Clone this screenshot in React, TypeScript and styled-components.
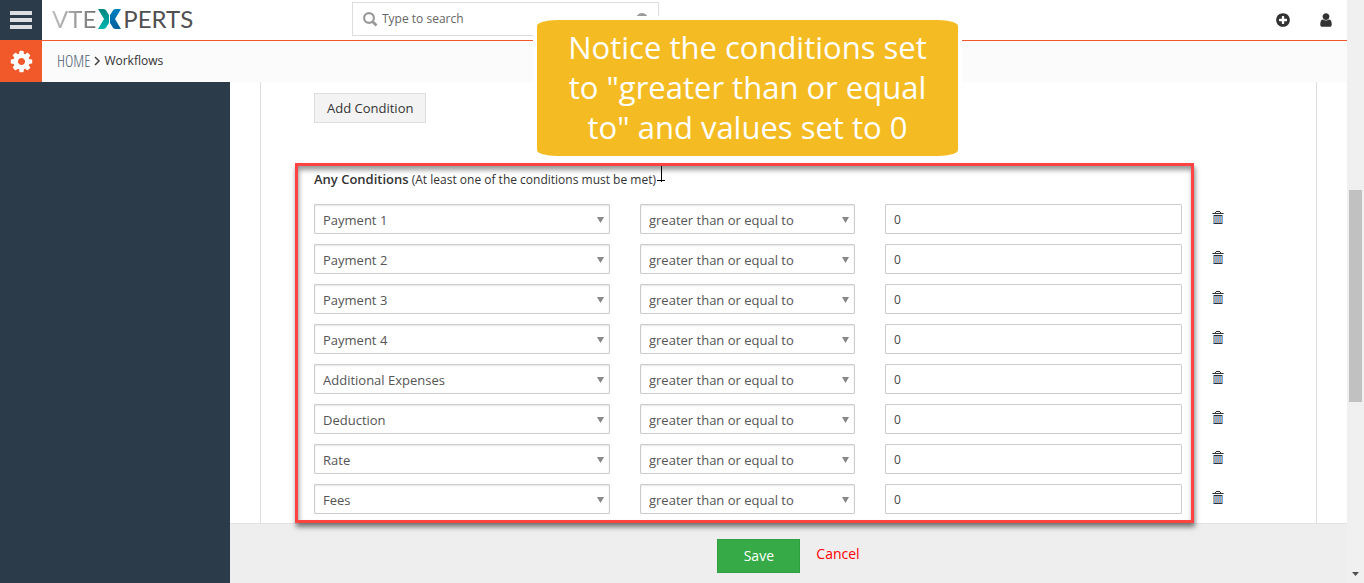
import React from "react";
import styled, { createGlobalStyle } from "styled-components";

const GlobalStyle = createGlobalStyle`
  *, *::before, *::after { box-sizing: border-box; }
  html, body, #root { height: 100%; }
  body {
    margin: 0;
    background: #fff;
    color: #333;
    font-family: "Open Sans", "Noto Sans", sans-serif;
    font-size: 13px;
    line-height: 20px;
  }
  button, input, select { font: inherit; color: inherit; }
`;

const Page = styled.div`
  position: relative;
  display: flex;
  min-height: 100vh;
`;

const Content = styled.div`
  flex: 1;
  min-width: 0;
  display: flex;
  flex-direction: column;
`;

const Header = styled.header`
  display: flex;
  align-items: flex-start;
  height: 41px;
  border-bottom: 1px solid #f1592a;
`;

const SquareButton = styled.button<{ $tone: string; $height: number }>`
  flex: none;
  display: flex;
  align-items: center;
  justify-content: center;
  width: 42px;
  height: ${(p) => p.$height}px;
  padding: 0;
  border: 0;
  background: ${(p) => p.$tone};
  color: #fff;
  cursor: pointer;
`;

const Brand = styled.div`
  flex: none;
  display: flex;
  width: 352px;
  height: 40px;
`;

const Logo = styled.a`
  display: flex;
  align-items: center;
  gap: 2px;
  padding-left: 10px;
  font-family: Lato, "Open Sans", sans-serif;
  font-size: 24px;
  line-height: 38px;
  height: 38px;
  text-decoration: none;
  color: #505050;
`;

const LogoFade = styled.span`
  background: linear-gradient(90deg, #bdbdbd, #9a9a9a 60%, #6a6a6a);
  background-clip: text;
  color: transparent;
`;

const SearchBox = styled.label`
  flex: none;
  display: flex;
  align-items: center;
  gap: 4px;
  width: 307px;
  height: 34px;
  margin-top: 2px;
  padding: 0 10px;
  border: 1px solid #ddd;
  color: #999;
`;

const SearchInput = styled.input`
  flex: 1;
  min-width: 0;
  padding: 0;
  border: 0;
  outline: 0;
  background: none;
  font-size: 12px;
  &::placeholder { color: #666; opacity: 1; }
`;

const HeaderActions = styled.div`
  flex: 1;
  display: flex;
  align-items: center;
  justify-content: flex-end;
  gap: 27px;
  height: 40px;
  padding-right: 13px;
`;

const IconButton = styled.button`
  display: flex;
  padding: 0;
  border: 0;
  background: none;
  color: #333;
  cursor: pointer;
`;

const Breadcrumb = styled.nav`
  display: flex;
  align-items: center;
  height: 42px;
  margin-top: -1px;
  background: linear-gradient(#f1592a 1px, #fbfbfb 1px);
`;

const HomeLink = styled.a`
  padding-left: 15px;
  font-family: "Open Sans Condensed Light", "Open Sans Light Condensed", "Open Sans Condensed", "Liberation Sans", sans-serif;
  font-size: 16px;
  font-weight: 300;
  text-decoration: none;
  color: #4c5b70;
`;

const Crumb = styled.span`
  font-size: 12px;
  color: #333;
`;

const Workspace = styled.div`
  flex: 1;
  display: flex;
`;

const Sidebar = styled.aside`
  flex: none;
  width: 230px;
  background: #2c3b49;
`;

const Main = styled.main`
  flex: 1;
  min-width: 0;
  display: flex;
  flex-direction: column;
`;

const Panel = styled.section`
  flex: 1;
  margin: 0 30px;
  padding-top: 11px;
  border: solid #ddd;
  border-width: 0 1px;
`;

const AddButton = styled.button`
  display: block;
  height: 30px;
  margin-left: 53px;
  padding: 0 12px;
  border: 1px solid #ddd;
  background: #f3f3f3;
  color: #333;
  cursor: pointer;
`;

const Conditions = styled.fieldset`
  position: relative;
  min-width: 0;
  margin: 40px 0 0;
  padding: 6px 0 9px 53px;
  border: 0;
`;

const Highlight = styled.div`
  position: absolute;
  z-index: 2;
  inset: 0 122px 0 34px;
  border: 3px solid #ff4343;
  box-shadow: 1px 4px 5px rgba(0, 0, 0, 0.5), inset 1px 4px 5px rgba(0, 0, 0, 0.4);
  pointer-events: none;
`;

const Caption = styled.p`
  margin: 0 0 14px;
  font-size: 12px;
  strong { font-size: 13px; font-weight: 600; }
`;

const Rows = styled.div`
  display: grid;
  gap: 10px;
`;

const Row = styled.div`
  display: grid;
  grid-template-columns: 296fr 215fr 297fr 74px;
  column-gap: 30px;
  padding-right: 30px;
`;

const SelectWrap = styled.span`
  position: relative;
  display: block;
  color: #888;
  svg { position: absolute; right: 6px; top: 13px; pointer-events: none; }
`;

const Select = styled.select`
  appearance: none;
  display: block;
  width: 100%;
  height: 30px;
  padding: 2px 20px 0 8px;
  border: 1px solid #ccc;
  border-radius: 1px;
  background: #fff;
  box-shadow: inset 0 1px 2px rgba(0, 0, 0, 0.1);
  color: #555;
`;

const ValueInput = styled.input`
  width: 100%;
  height: 30px;
  padding: 0 8px;
  border: 1px solid #ccc;
  border-radius: 1px;
  background: #fff;
  font-size: 12px;
  color: #444;
`;

const TrashButton = styled(IconButton)`
  align-self: start;
  padding-top: 7px;
`;

const Footer = styled.footer`
  flex: none;
  display: flex;
  justify-content: center;
  align-items: flex-start;
  gap: 16px;
  height: 60px;
  padding-top: 15px;
  border-top: 1px solid #e2e2e2;
  background: #eee;
  font-size: 14px;
`;

const SaveButton = styled.button`
  width: 83px;
  height: 34px;
  padding: 0;
  border: 1px solid #2f9e42;
  background: #35aa47;
  color: #fff;
  cursor: pointer;
`;

const CancelLink = styled.a`
  padding-top: 5px;
  text-decoration: none;
  color: #f00;
`;

const ScrollTrack = styled.div`
  flex: none;
  display: flex;
  flex-direction: column;
  align-items: center;
  width: 17px;
  padding: 190px 2px 7px;
  background: #f0f0f0;
  color: #505050;
`;

const ScrollThumb = styled.div`
  width: 13px;
  height: 212px;
  margin-bottom: auto;
  background: #c1c1c1;
`;

const Callout = styled.p`
  position: absolute;
  z-index: 3;
  left: 537px;
  top: 20px;
  width: 421px;
  margin: 0;
  padding: 7px 0 9px;
  border-radius: 20px / 6px;
  background: #f4bc22;
  box-shadow: 0 0 0 4px #fff;
  font-family: "Open Sans", sans-serif;
  font-size: 31px;
  line-height: 40px;
  text-align: center;
  color: #fff;
`;

const Pointer = styled.svg`
  position: absolute;
  z-index: 4;
  left: 657px;
  top: 166px;
`;

const FIELDS = [
  "Payment 1",
  "Payment 2",
  "Payment 3",
  "Payment 4",
  "Additional Expenses",
  "Deduction",
  "Rate",
  "Fees",
];

function Glyph({ d, size }: { d: string; size: number }) {
  return (
    <svg width={size} height={size} viewBox="0 0 1792 1792" fill="currentColor" aria-hidden="true">
      <path d={d} />
    </svg>
  );
}

const COG =
  "M1152 896q0-106-75-181t-181-75-181 75-75 181 75 181 181 75 181-75 75-181zm512-109v222q0 12-8 23t-20 13l-185 28q-19 54-39 91 35 50 107 138 10 12 10 25t-9 23q-27 37-99 108t-94 71q-12 0-26-9l-138-108q-44 23-91 38-16 136-29 186-7 28-36 28h-222q-14 0-24.5-8.5t-11.5-21.5l-28-184q-49-16-90-37l-141 107q-10 9-25 9-14 0-25-11-126-114-165-168-7-10-7-23 0-12 8-23 15-21 51-66.5t54-70.5q-27-50-41-99l-183-27q-13-2-21-12.5t-8-23.5v-222q0-12 8-23t19-13l186-28q14-46 39-92-40-57-107-138-10-12-10-24 0-10 9-23 26-36 98.5-107.5t94.5-71.5q13 0 26 10l138 107q44-23 91-38 16-136 29-186 7-28 36-28h222q14 0 24.5 8.5t11.5 21.5l28 184q49 16 90 37l142-107q9-9 24-9 13 0 25 10 129 119 165 170 7 8 7 22 0 12-8 23-15 21-51 66.5t-54 70.5q26 50 41 98l183 28q13 2 21 12.5t8 23.5z";
const PLUS =
  "M1344 960v-128q0-26-19-45t-45-19h-256v-256q0-26-19-45t-45-19h-128q-26 0-45 19t-19 45v256h-256q-26 0-45 19t-19 45v128q0 26 19 45t45 19h256v256q0 26 19 45t45 19h128q26 0 45-19t19-45v-256h256q26 0 45-19t19-45zm320-64q0 209-103 385.5t-279.5 279.5-385.5 103-385.5-103-279.5-279.5-103-385.5 103-385.5 279.5-279.5 385.5-103 385.5 103 279.5 279.5 103 385.5z";
const USER =
  "M1536 1399q0 109-62.5 187t-150.5 78h-854q-88 0-150.5-78t-62.5-187q0-85 8.5-160.5t31.5-152 58.5-131 94-89 134.5-34.5q131 128 313 128t313-128q76 0 134.5 34.5t94 89 58.5 131 31.5 152 8.5 160.5zm-256-887q0 159-112.5 271.5t-271.5 112.5-271.5-112.5-112.5-271.5 112.5-271.5 271.5-112.5 271.5 112.5 112.5 271.5z";

function Trash() {
  return (
    <svg width="12" height="13" viewBox="0 0 12 13" shapeRendering="crispEdges" aria-hidden="true">
      <path fill="#6aaef5" d="M1 4h10v9H1z" />
      <path fill="#d0a47c" d="M1 5h1v7H1zM3 5h1v7H3zM5 5h1v7H5zM7 5h1v7H7zM9 5h1v7H9z" />
      <path fill="#333" d="M4 0h4v1H4zM3 1h1v1H3zM8 1h1v1H8zM1 2h10v1H1zM2 4h8v1H2zM2 12h8v1H2z" />
      <path fill="#7a8087" d="M0 2h1v1H0zM11 2h1v1H11z" />
    </svg>
  );
}

function LogoMark() {
  return (
    <svg width="23" height="20" viewBox="0 0 23 20" aria-hidden="true">
      <defs>
        <linearGradient id="teal" x1="0" y1="0" x2="0" y2="1">
          <stop offset="0" stopColor="#00857f" />
          <stop offset="1" stopColor="#00b8b0" />
        </linearGradient>
        <linearGradient id="blue" x1="0" y1="0" x2="0" y2="1">
          <stop offset="0" stopColor="#0080c0" />
          <stop offset="1" stopColor="#005e9c" />
        </linearGradient>
      </defs>
      <path fill="url(#teal)" d="M0 0h5q3 0 4 3l2 3v8l-2 3q-1 3-4 3H0l6-10z" />
      <path fill="url(#blue)" d="M23 0h-5q-3 0-4 3l-2 3v8l2 3q1 3 4 3h5l-6-10z" />
    </svg>
  );
}

function Picker({ label, value, options }: { label: string; value: string; options: string[] }) {
  return (
    <SelectWrap>
      <Select aria-label={label} defaultValue={value}>
        {options.map((o) => (
          <option key={o}>{o}</option>
        ))}
      </Select>
      <svg width="7" height="6" viewBox="0 0 7 6" fill="currentColor" aria-hidden="true">
        <path d="M0 0h7L3.5 6z" />
      </svg>
    </SelectWrap>
  );
}

export default function App() {
  return (
    <>
      <GlobalStyle />
      <Page>
        <Content>
          <Header>
            <Brand>
              <SquareButton $tone="#2c3b49" $height={40} aria-label="Menu">
                <svg width="22" height="18" viewBox="0 0 22 18" fill="#dcdee2" aria-hidden="true">
                  <path d="M0 0h22v4H0zM0 7h22v4H0zM0 14h22v4H0z" />
                </svg>
              </SquareButton>
              <Logo href="#" aria-label="VTExperts">
                <LogoFade>VTE</LogoFade>
                <LogoMark />
                <span>PERTS</span>
              </Logo>
            </Brand>
            <SearchBox>
              <svg width="15" height="15" viewBox="0 0 15 15" fill="none" stroke="currentColor" aria-hidden="true">
                <circle cx="6" cy="6" r="4.9" strokeWidth="2.2" />
                <path d="M9.5 9.5l4 4" strokeWidth="2.8" />
              </svg>
              <SearchInput type="text" placeholder="Type to search" aria-label="Search" />
              <svg width="12" height="12" viewBox="0 0 12 12" aria-hidden="true">
                <circle cx="6" cy="6" r="6" fill="currentColor" />
              </svg>
            </SearchBox>
            <HeaderActions>
              <IconButton aria-label="Quick create">
                <Glyph d={PLUS} size={16} />
              </IconButton>
              <IconButton aria-label="Account">
                <Glyph d={USER} size={16} />
              </IconButton>
            </HeaderActions>
          </Header>

          <Breadcrumb aria-label="Breadcrumb">
            <SquareButton $tone="#f1592a" $height={42} aria-label="Settings">
              <Glyph d={COG} size={25} />
            </SquareButton>
            <HomeLink href="#">HOME</HomeLink>
            <svg width="14" height="10" viewBox="0 0 14 10" fill="none" stroke="#444" strokeWidth="1.5" aria-hidden="true">
              <path d="M5 1l4 4-4 4" />
            </svg>
            <Crumb>Workflows</Crumb>
          </Breadcrumb>

          <Workspace>
            <Sidebar />
            <Main>
              <Panel>
                <AddButton type="button">Add Condition</AddButton>
                <Conditions>
                  <Highlight />
                  <Caption>
                    <strong>Any Conditions</strong> (At least one of the conditions must be met)
                  </Caption>
                  <Rows>
                    {FIELDS.map((f) => (
                      <Row key={f}>
                        <Picker label="Field" value={f} options={FIELDS} />
                        <Picker
                          label={`${f} comparator`}
                          value="greater than or equal to"
                          options={["greater than or equal to"]}
                        />
                        <ValueInput type="text" defaultValue="0" aria-label={`${f} value`} />
                        <TrashButton type="button" aria-label={`Delete ${f}`}>
                          <Trash />
                        </TrashButton>
                      </Row>
                    ))}
                  </Rows>
                </Conditions>
              </Panel>
              <Footer>
                <SaveButton type="button">Save</SaveButton>
                <CancelLink href="#">Cancel</CancelLink>
              </Footer>
            </Main>
          </Workspace>
        </Content>

        <ScrollTrack aria-hidden="true">
          <ScrollThumb />
          <svg width="7" height="4" viewBox="0 0 7 4" fill="currentColor">
            <path d="M0 0h7L3.5 4z" />
          </svg>
        </ScrollTrack>

        <Callout>
          Notice the conditions set
          <br />
          to "greater than or equal
          <br />
          to" and values set to 0
        </Callout>
        <Pointer width="8" height="16" viewBox="0 0 8 16" shapeRendering="crispEdges" aria-hidden="true">
          <path d="M4 0h1v16H4zM0 14h8v1H0z" />
        </Pointer>
      </Page>
    </>
  );
}
